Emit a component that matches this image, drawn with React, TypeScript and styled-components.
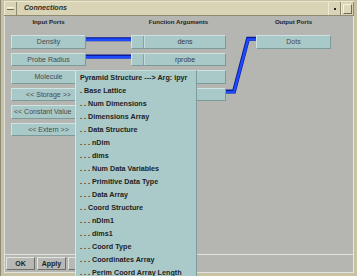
import React from "react"
import styled, { createGlobalStyle } from "styled-components"

const GlobalStyle = createGlobalStyle`
  html, body {
    margin: 0;
    padding: 0;
    background: #c6c2a3;
  }
  * {
    box-sizing: border-box;
  }
`

const FONT = `"Liberation Sans", Arial, Helvetica, sans-serif`

const Window = styled.div`
  position: relative;
  width: 357px;
  height: 276px;
  overflow: hidden;
  display: flex;
  flex-direction: column;
  padding: 1px 3px 3px 3px;
  background: #c6c2a3;
  border-left: 1px solid #8c8a72;
  font-family: ${FONT};
`

const TitleBar = styled.div`
  display: flex;
  align-items: stretch;
  height: 15px;
  background: #d8d4b5;
  border-top: 1px solid #ebe8d2;
  border-bottom: 1px solid #8e8b70;
`

const TitleButton = styled.div<{ $w: number }>`
  width: ${(p) => p.$w}px;
  display: flex;
  align-items: center;
  justify-content: center;
  border-left: 1px solid #ece9d4;
  border-right: 1px solid #8e8b70;
`

const MenuBar = styled.div`
  width: 7px;
  height: 3px;
  background: #e8e5d0;
  border-top: 1px solid #f4f2e4;
  border-bottom: 1px solid #6e6c58;
`

const MinDot = styled.div`
  width: 2px;
  height: 2px;
  background: #2a2a22;
`

const MaxBox = styled.div`
  width: 9px;
  height: 10px;
  border: 1px solid;
  border-color: #f4f2e4 #6e6c58 #6e6c58 #f4f2e4;
  background: #dcd8ba;
`

const Title = styled.div`
  flex: 1;
  padding-left: 7px;
  font-size: 7.1px;
  font-weight: bold;
  font-style: italic;
  line-height: 13px;
  color: #2e2e26;
`

const Body = styled.div`
  flex: 1;
  display: flex;
  padding-left: 6px;
  background: #b5b5b1;
  border-left: 1px solid #e0e0dc;
  border-right: 1px solid #e6e6e2;
  border-bottom: 1px solid #e2e2de;
`

const Column = styled.div<{ $w: number; $gap: number }>`
  width: ${(p) => p.$w}px;
  margin-right: ${(p) => p.$gap}px;
  display: flex;
  flex-direction: column;
  gap: 4.1px;
`

const Header = styled.div`
  height: 15.2px;
  padding-top: 1px;
  text-align: center;
  font-size: 6.1px;
  font-weight: bold;
  line-height: 10px;
  color: #1e1e1e;
  white-space: nowrap;
`

const PortButton = styled.div<{ $start?: boolean }>`
  height: 13.4px;
  display: flex;
  align-items: center;
  justify-content: ${(p) => (p.$start ? "flex-start" : "center")};
  padding-left: ${(p) => (p.$start ? "2px" : "0")};
  overflow: hidden;
  background: #a9c8c8;
  border: 1px solid;
  border-color: #cfe3e3 #7d9a9a #7d9a9a #cfe3e3;
  font-size: 7px;
  color: #4a4a4a;
  white-space: nowrap;
`

const ArgBox = styled.div`
  height: 13.4px;
  display: flex;
  background: #a9c8c8;
  border: 1px solid;
  border-color: #cfe3e3 #7d9a9a #7d9a9a #cfe3e3;
`

const ArgHandle = styled.div`
  width: 12px;
  border-right: 1px solid #86a3a3;
`

const ArgName = styled.div`
  flex: 1;
  display: flex;
  align-items: center;
  justify-content: center;
  font-size: 7px;
  color: #3a3a3a;
  border-left: 1px solid #c4dcdc;
`

const Footer = styled.div`
  height: 18px;
  display: flex;
  align-items: center;
  gap: 2px;
  padding: 0 0 0 1px;
  background: #b5b5b1;
  border-left: 1px solid #e0e0dc;
  border-right: 1px solid #e6e6e2;
  border-bottom: 1px solid #e2e2de;
`

const FooterButton = styled.div<{ $w: number }>`
  width: ${(p) => p.$w}px;
  height: 13px;
  display: flex;
  align-items: center;
  justify-content: center;
  background: #b8b8b4;
  border: 1px solid;
  border-color: #e4e4e0 #6e6e6a #6e6e6a #e4e4e0;
  font-size: 7px;
  font-weight: bold;
  color: #1e1e1e;
`

const Wires = styled.svg`
  position: absolute;
  left: 0;
  top: 0;
  pointer-events: none;
`

const PopupMenu = styled.div`
  position: absolute;
  left: 74px;
  top: 70px;
  width: 122px;
  height: 220px;
  overflow: hidden;
  background: #aacaca;
  border-left: 1px solid #d2e6e6;
  border-top: 1px solid #c6dede;
  border-right: 1px solid #7f9c9c;
  padding-left: 4px;
`

const MenuItem = styled.div`
  height: 13px;
  line-height: 13px;
  font-size: 7.2px;
  font-weight: bold;
  color: #222;
  white-space: nowrap;
`

const inputs = [
  "Density",
  "Probe Radius",
  "Molecule",
  "<< Storage >>",
  "<< Constant Value",
  "<< Extern >>",
]

const args = ["dens", "rprobe", "", ""]

const menuItems = [
  "Pyramid Structure ---> Arg: ipyr",
  ". Base Lattice",
  ". . Num Dimensions",
  ". . Dimensions Array",
  ". . Data Structure",
  ". . . nDim",
  ". . . dims",
  ". . . Num Data Variables",
  ". . . Primitive Data Type",
  ". . . Data Array",
  ". . Coord Structure",
  ". . . nDim1",
  ". . . dims1",
  ". . . Coord Type",
  ". . . Coordinates Array",
  ". . . Perim Coord Array Length",
]

const Wire = ({ d }: { d: string }) => (
  <>
    <path d={d} stroke="#0a1a9a" strokeWidth={4} fill="none" />
    <path
      d={d}
      stroke="#1f4bff"
      strokeWidth={2.4}
      fill="none"
      transform="translate(0 0.6)"
    />
  </>
)

const App = () => {
  return (
    <>
      <GlobalStyle />
      <Window>
        <TitleBar>
          <TitleButton $w={13}>
            <MenuBar />
          </TitleButton>
          <Title>Connections</Title>
          <TitleButton $w={13}>
            <MinDot />
          </TitleButton>
          <TitleButton $w={13}>
            <MaxBox />
          </TitleButton>
        </TitleBar>

        <Body>
          <Column $w={75} $gap={45}>
            <Header>Input Ports</Header>
            {inputs.map((name) => (
              <PortButton key={name} $start={name === "<< Constant Value"}>
                {name}
              </PortButton>
            ))}
          </Column>
          <Column $w={95} $gap={30}>
            <Header>Function Arguments</Header>
            {args.map((name, i) => (
              <ArgBox key={i}>
                <ArgHandle />
                <ArgName>{name}</ArgName>
              </ArgBox>
            ))}
          </Column>
          <Column $w={75} $gap={0}>
            <Header>Output Ports</Header>
            <PortButton>Dots</PortButton>
          </Column>
        </Body>

        <Footer>
          <FooterButton $w={29}>OK</FooterButton>
          <FooterButton $w={29}>Apply</FooterButton>
          <FooterButton $w={40}>Cancel</FooterButton>
        </Footer>

        <Wires width={357} height={276}>
          <Wire d="M85 39.2 H130" />
          <Wire d="M85 56.6 H130" />
          <Wire d="M225 91.5 H233 L247 38.8 H255" />
        </Wires>

        <PopupMenu>
          {menuItems.map((item) => (
            <MenuItem key={item}>{item}</MenuItem>
          ))}
        </PopupMenu>
      </Window>
    </>
  )
}

export default App
